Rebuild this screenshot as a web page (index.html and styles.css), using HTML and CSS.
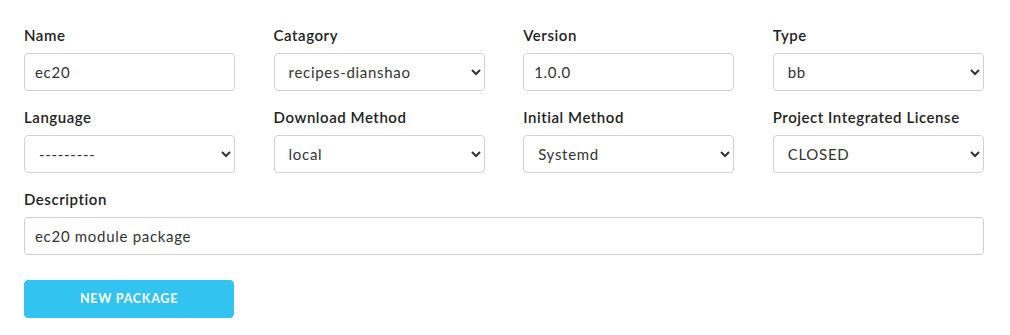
FILE: index.html
```html
<!DOCTYPE html>
<html lang="en">
<head>
<meta charset="utf-8">
<title>New Package</title>
<link rel="stylesheet" href="styles.css">
</head>
<body>
<form class="form">
  <div class="row">
    <div class="col">
      <label class="label" for="name">Name</label>
      <input class="field" id="name" type="text" value="ec20">
    </div>
    <div class="col">
      <label class="label" for="cat">Catagory</label>
      <select class="field" id="cat"><option>recipes-dianshao</option></select>
    </div>
    <div class="col">
      <label class="label" for="ver">Version</label>
      <input class="field" id="ver" type="text" value="1.0.0">
    </div>
    <div class="col">
      <label class="label" for="type">Type</label>
      <select class="field" id="type"><option>bb</option></select>
    </div>
  </div>
  <div class="row">
    <div class="col">
      <label class="label" for="lang">Language</label>
      <select class="field" id="lang"><option>---------</option></select>
    </div>
    <div class="col">
      <label class="label" for="dl">Download Method</label>
      <select class="field" id="dl"><option>local</option></select>
    </div>
    <div class="col">
      <label class="label" for="init">Initial Method</label>
      <select class="field" id="init"><option>Systemd</option></select>
    </div>
    <div class="col">
      <label class="label" for="lic">Project Integrated License</label>
      <select class="field" id="lic"><option>CLOSED</option></select>
    </div>
  </div>
  <div class="row">
    <div class="col-full">
      <label class="label" for="desc">Description</label>
      <input class="field" id="desc" type="text" value="ec20 module package">
    </div>
  </div>
  <div class="actions">
    <button class="btn-primary" type="button">New Package</button>
  </div>
</form>
</body>
</html>
```
FILE: styles.css
```css
html { font-size: 10px; }
body {
  margin: 0;
  background: #fff;
  color: #222;
  font-family: Lato, "Open Sans", sans-serif;
  font-size: 15px;
  line-height: 1.6;
  letter-spacing: 0.55px;
}
.form {
  width: 960px;
  padding: 24px 0 0 24px;
}
.row {
  display: flex;
  gap: 38.4px;
}
.col { width: 211.2px; }
.col-full { width: 960px; }
.label {
  display: block;
  font-weight: 600;
  margin-bottom: 7px;
  line-height: 22px;
  color: #222;
}
.field {
  display: block;
  box-sizing: border-box;
  width: 100%;
  height: 38px;
  margin: 0 0 15px 0;
  padding: 6px 10px;
  background-color: #fff;
  border: 1px solid #d1d1d1;
  border-radius: 4px;
  box-shadow: none;
  font: inherit;
  letter-spacing: 0.7px;
  color: #333;
}
.actions { padding-top: 10px; }
.btn-primary {
  box-sizing: border-box;
  width: 210px;
  height: 38px;
  padding: 0 20px;
  border: 1px solid #33c3f0;
  border-radius: 4px;
  background: #33c3f0;
  color: #fff;
  font-family: inherit;
  font-size: 12.5px;
  font-weight: 700;
  line-height: 36px;
  letter-spacing: 0.75px;
  text-transform: uppercase;
  text-align: center;
}
```
